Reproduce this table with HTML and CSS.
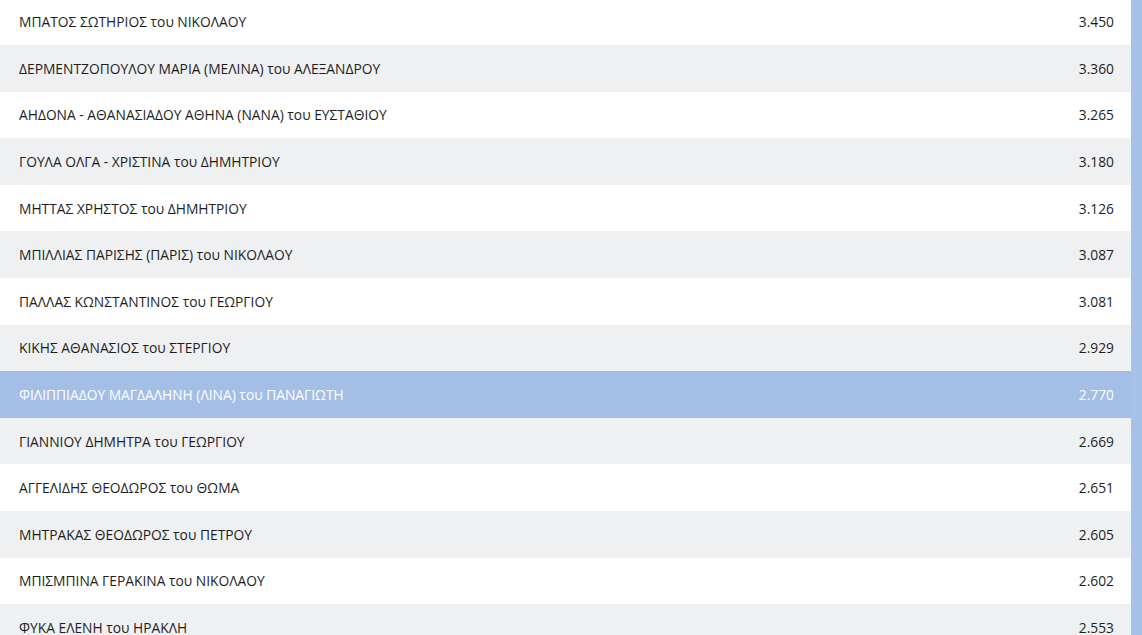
FILE: index.html
```html
<!DOCTYPE html>
<html lang="el">

<head>
  <meta charset="UTF-8">
  <title>Σταυροί προτίμησης</title>
  <link rel="stylesheet" href="styles.css">
</head>

<body>
  <div class="page">
    <table class="results">
      <tbody>
        <tr><td>ΜΠΑΤΟΣ ΣΩΤΗΡΙΟΣ του ΝΙΚΟΛΑΟΥ</td><td class="votes">3.450</td></tr>
        <tr><td>ΔΕΡΜΕΝΤΖΟΠΟΥΛΟΥ ΜΑΡΙΑ (ΜΕΛΙΝΑ) του ΑΛΕΞΑΝΔΡΟΥ</td><td class="votes">3.360</td></tr>
        <tr><td>ΑΗΔΟΝΑ - ΑΘΑΝΑΣΙΑΔΟΥ ΑΘΗΝΑ (ΝΑΝΑ) του ΕΥΣΤΑΘΙΟΥ</td><td class="votes">3.265</td></tr>
        <tr><td>ΓΟΥΛΑ ΟΛΓΑ - ΧΡΙΣΤΙΝΑ του ΔΗΜΗΤΡΙΟΥ</td><td class="votes">3.180</td></tr>
        <tr><td>ΜΗΤΤΑΣ ΧΡΗΣΤΟΣ του ΔΗΜΗΤΡΙΟΥ</td><td class="votes">3.126</td></tr>
        <tr><td>ΜΠΙΛΛΙΑΣ ΠΑΡΙΣΗΣ (ΠΑΡΙΣ) του ΝΙΚΟΛΑΟΥ</td><td class="votes">3.087</td></tr>
        <tr><td>ΠΑΛΛΑΣ ΚΩΝΣΤΑΝΤΙΝΟΣ του ΓΕΩΡΓΙΟΥ</td><td class="votes">3.081</td></tr>
        <tr><td>ΚΙΚΗΣ ΑΘΑΝΑΣΙΟΣ του ΣΤΕΡΓΙΟΥ</td><td class="votes">2.929</td></tr>
        <tr class="selected"><td>ΦΙΛΙΠΠΙΑΔΟΥ ΜΑΓΔΑΛΗΝΗ (ΛΙΝΑ) του ΠΑΝΑΓΙΩΤΗ</td><td class="votes">2.770</td></tr>
        <tr><td>ΓΙΑΝΝΙΟΥ ΔΗΜΗΤΡΑ του ΓΕΩΡΓΙΟΥ</td><td class="votes">2.669</td></tr>
        <tr><td>ΑΓΓΕΛΙΔΗΣ ΘΕΟΔΩΡΟΣ του ΘΩΜΑ</td><td class="votes">2.651</td></tr>
        <tr><td>ΜΗΤΡΑΚΑΣ ΘΕΟΔΩΡΟΣ του ΠΕΤΡΟΥ</td><td class="votes">2.605</td></tr>
        <tr><td>ΜΠΙΣΜΠΙΝΑ ΓΕΡΑΚΙΝΑ του ΝΙΚΟΛΑΟΥ</td><td class="votes">2.602</td></tr>
        <tr><td>ΦΥΚΑ ΕΛΕΝΗ του ΗΡΑΚΛΗ</td><td class="votes">2.553</td></tr>
      </tbody>
    </table>
    <div class="side-bar"></div>
  </div>
</body>

</html>
```

FILE: styles.css
```css
body {
  margin: 0;
  padding: 0;
  background-color: #ffffff;
  font-family: "Open Sans", "Noto Sans", sans-serif;
  font-size: 13.8px;
  color: #1e1e1e;
  overflow: hidden;
}

.page {
  display: flex;
  height: 635px;
}

.results {
  flex: 1;
  border-collapse: collapse;
  margin-top: -1.6px;
  align-self: flex-start;
}

.results td {
  height: 46.6px;
  padding: 0 17px 0 19px;
  box-sizing: border-box;
  vertical-align: middle;
  white-space: nowrap;
}

.results tr:nth-child(even) {
  background-color: #eff0f2;
}

.results tr.selected {
  background-color: #a5bee6;
  color: #ffffff;
}

.results .votes {
  text-align: right;
}

.side-bar {
  width: 11px;
  background-color: #a8c1e8;
}
```
